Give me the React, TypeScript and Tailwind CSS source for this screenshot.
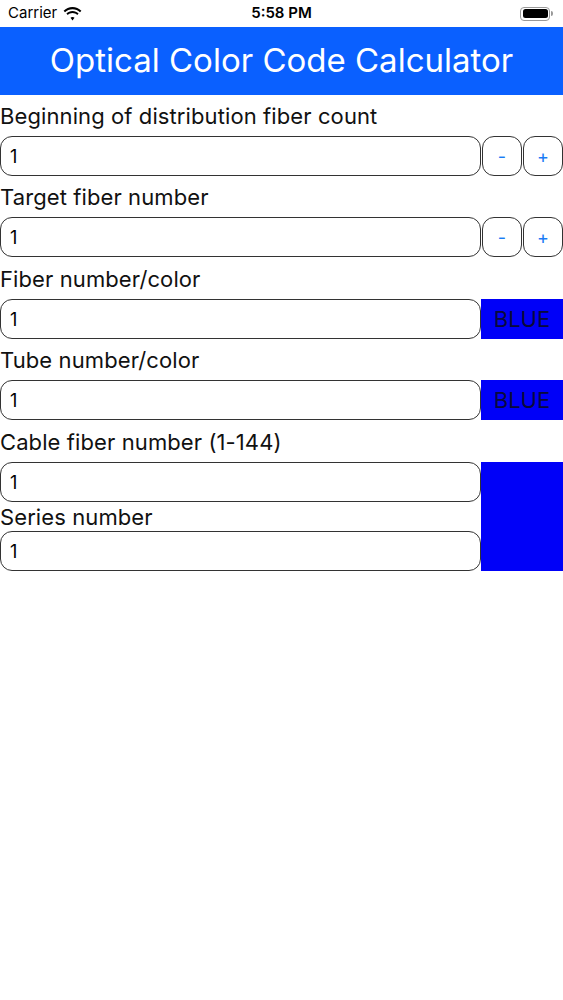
import React from "react";

const font = { fontFamily: "Inter, 'Noto Sans', sans-serif" };

const Wifi = () => (
  <svg width="19" height="14" viewBox="0 0 19 14" className="ml-[6px]">
    <path d="M9.5 2.2c2.9 0 5.5 1.1 7.5 3l1.4-1.5C16 1.4 12.9 0 9.5 0S3 1.4.6 3.7L2 5.2c2-1.9 4.6-3 7.5-3z" fill="#000" />
    <path d="M9.5 6.1c1.8 0 3.4.7 4.7 1.8l1.4-1.5C14 4.9 11.8 4 9.5 4S5 4.9 3.4 6.4l1.4 1.5c1.3-1.1 2.9-1.8 4.7-1.8z" fill="#000" />
    <path d="M9.5 9.9c.8 0 1.5.3 2 .8L9.5 13.5 7.5 10.7c.5-.5 1.2-.8 2-.8z" fill="#000" />
  </svg>
);

const Battery = () => (
  <div className="flex items-center">
    <div className="w-[30px] h-[14px] rounded-[4px] border border-[#999] p-[1.5px]">
      <div className="w-full h-full rounded-[2.5px] bg-black" />
    </div>
    <div className="w-[2px] h-[5px] rounded-r-sm bg-[#999] ml-[1px]" />
  </div>
);

const Field = ({ grow = true }: { grow?: boolean }) => (
  <div
    className={`${grow ? "flex-1" : "w-full"} shrink-0 h-[40px] rounded-[12px] border-[1.5px] border-[#333] flex items-center pl-[9px] text-[18px] text-black`}
  >
    1
  </div>
);

// heights differ slightly per row, as measured on the device shot
const Label = ({ children, h = "h-[41px]" }: { children: React.ReactNode; h?: string }) => (
  <div className={`${h} pt-[1px] flex items-center text-[22px] tracking-[0.1px] text-[#111] leading-none`}>
    {children}
  </div>
);

const StepButton = ({ sign }: { sign: string }) => (
  <div className="w-[40px] h-[40px] rounded-[12px] border-[1.5px] border-[#333] flex items-center justify-center text-[#1a7bf5] text-[18px]">
    {sign}
  </div>
);

const ColorBox = () => (
  <div className="w-[82px] h-[40px] bg-[#0000f8] flex items-center justify-center text-[22px] text-[#0a0a3a]">BLUE</div>
);

export default function App() {
  return (
    <div className="w-[563px] h-[1000px] bg-white" style={font}>
      <div className="h-[27px] flex items-center justify-between px-[8px] relative">
        <div className="flex items-center text-[15px] text-black">
          Carrier
          <Wifi />
        </div>
        <div className="absolute left-0 right-0 text-center text-[15px] font-semibold text-black">5:58 PM</div>
        <div className="mr-[2px]">
          <Battery />
        </div>
      </div>
      <div className="h-[68px] bg-[#0a60ff] flex items-center justify-center text-white text-[33px]">
        Optical Color Code Calculator
      </div>

      <Label>Beginning of distribution fiber count</Label>
      <div className="flex gap-[1px]">
        <Field />
        <StepButton sign="-" />
        <StepButton sign="+" />
      </div>

      <Label>Target fiber number</Label>
      <div className="flex gap-[1px]">
        <Field />
        <StepButton sign="-" />
        <StepButton sign="+" />
      </div>

      <Label h="h-[42px]">Fiber number/color</Label>
      <div className="flex">
        <Field />
        <ColorBox />
      </div>

      <Label>Tube number/color</Label>
      <div className="flex">
        <Field />
        <ColorBox />
      </div>

      <Label h="h-[42px]">Cable fiber number (1-144)</Label>
      <div className="flex">
        <div className="flex-1 flex flex-col">
          <Field grow={false} />
          <Label h="h-[29px]">Series number</Label>
          <Field grow={false} />
        </div>
        <div className="w-[82px] bg-[#0000f8]" />
      </div>
    </div>
  );
}
